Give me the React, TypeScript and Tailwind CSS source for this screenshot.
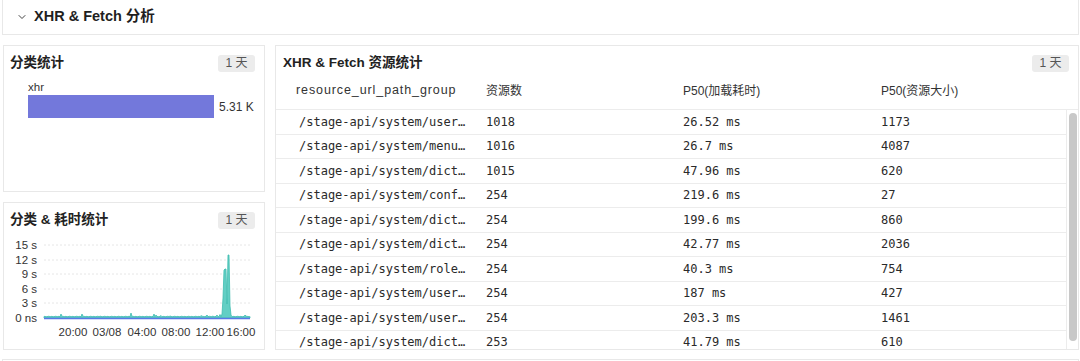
import { ChevronDown } from 'lucide-react'

const sans = { fontFamily: '"Liberation Sans", "Noto Sans CJK SC", sans-serif' }
const mono = { fontFamily: '"DejaVu Sans Mono", "Liberation Mono", monospace' }

const rows = [
  ['/stage-api/system/user…', '1018', '26.52 ms', '1173'],
  ['/stage-api/system/menu…', '1016', '26.7 ms', '4087'],
  ['/stage-api/system/dict…', '1015', '47.96 ms', '620'],
  ['/stage-api/system/conf…', '254', '219.6 ms', '27'],
  ['/stage-api/system/dict…', '254', '199.6 ms', '860'],
  ['/stage-api/system/dict…', '254', '42.77 ms', '2036'],
  ['/stage-api/system/role…', '254', '40.3 ms', '754'],
  ['/stage-api/system/user…', '254', '187 ms', '427'],
  ['/stage-api/system/user…', '254', '203.3 ms', '1461'],
  ['/stage-api/system/dict…', '253', '41.79 ms', '610'],
]

function Badge() {
  return (
    <span className="flex h-[17px] w-[37px] items-center justify-center rounded-[3px] bg-[#ececec] text-[12px] text-[#555]">
      1 天
    </span>
  )
}

function CardTitle({ title, pl = 'pl-[6px]' }: { title: string; pl?: string }) {
  return (
    <div className={`flex items-center justify-between pr-[9px] pt-[8px] ${pl}`}>
      <span className="text-[13.5px] font-bold leading-[18px] text-[#222]">{title}</span>
      <Badge />
    </div>
  )
}

const bumps: Record<number, number> = {
  57: 4, 78: 4, 96: 1.8, 127: 5, 150: 4, 152: 3, 157: 2.5, 166: 2, 197: 2.5, 203: 3,
  209: 2, 213: 3, 216: 3.5, 218: 4, 219: 20, 220: 48, 221: 49, 222: 49, 223: 14,
  224: 63, 225: 63, 226: 12, 227: 3, 241: 3, 242: 2,
}

function areaPath() {
  let d = 'M40,81'
  for (let x = 40; x <= 246; x++) {
    const h = bumps[x] ?? 1.2 + ((x * 37) % 7) / 10
    d += ` L${x},${81 - h}`
  }
  return d + ' L246,81 Z'
}

function Chart() {
  const yl = [['15 s', 8], ['12 s', 23], ['9 s', 37], ['6 s', 52], ['3 s', 66], ['0 ns', 81]] as const
  const xl = [['20:00', 69], ['03/08', 103], ['04:00', 138], ['08:00', 172], ['12:00', 206], ['16:00', 237]] as const
  return (
    <svg width="258" height="104" className="mt-[8px] block" style={sans}>
      {yl.map(([t, y]) => (
        <g key={t}>
          <text x="33" y={y + 4} fontSize="11.5" fill="#333" textAnchor="end">{t}</text>
          {y !== 81 && <line x1="40" x2="246" y1={y} y2={y} stroke="#e6e6e6" strokeDasharray="2 2" />}
        </g>
      ))}
      <path d={areaPath()} fill="#62cfc4" stroke="#3fbcb0" strokeWidth="0.8" />
      <line x1="40" x2="246" y1="81.5" y2="81.5" stroke="#5a78e6" strokeWidth="1.5" />
      {xl.map(([t, x]) => (
        <text key={t} x={x} y="99" fontSize="11.5" fill="#333" textAnchor="middle">{t}</text>
      ))}
    </svg>
  )
}

export default function App() {
  return (
    <div className="h-[361px] w-[1080px] overflow-hidden bg-white" style={sans}>
      <div className="ml-[2px] mr-[1px] flex h-[35px] items-center border border-t-0 border-[#e8e8e8] pl-[13px]">
        <ChevronDown size={12} strokeWidth={2} className="mr-[6px] text-[#444]" />
        <span className="text-[14.5px] font-bold text-[#1f1f1f]">XHR &amp; Fetch 分析</span>
      </div>

      <div className="mt-[10px] flex gap-[10px] pl-[3px] pr-[1px]">
        <div className="flex w-[262px] flex-col gap-[10px]">
          <div className="h-[147px] border border-[#e8e8e8]">
            <CardTitle title="分类统计" />
            <div className="pl-[24px] pt-[8px]">
              <div className="text-[11.5px] leading-[14px] text-[#333]">xhr</div>
              <div className="mt-[1px] flex items-center">
                <div className="h-[23px] w-[186px] bg-[#7378db]" />
                <span className="ml-[5px] text-[12px] text-[#333]">5.31 K</span>
              </div>
            </div>
          </div>
          <div className="h-[148px] border border-[#e8e8e8]">
            <CardTitle title="分类 & 耗时统计" />
            <Chart />
          </div>
        </div>

        <div className="flex h-[305px] flex-1 flex-col border border-[#e8e8e8]">
          <CardTitle title="XHR & Fetch 资源统计" pl="pl-[7px]" />
          <div className="flex h-[37px] items-center text-[12px] text-[#333]">
            <div className="w-[200px] pl-[20px] text-[12.5px] tracking-[0.9px]">resource_url_path_group</div>
            <div className="w-[197px] pl-[10px]">资源数</div>
            <div className="w-[198px] pl-[10px]">P50(加载耗时)</div>
            <div className="pl-[10px]">P50(资源大小)</div>
          </div>
          <div className="flex min-h-0 flex-1 border-t border-[#ececec]">
            <div className="min-w-0 flex-1 overflow-hidden">
              {rows.map((r, i) => (
                <div key={i} className="flex h-[24.5px] shrink-0 items-center border-b border-[#ececec] text-[12px] text-[#2a2a2a]" style={mono}>
                  <div className="w-[200px] pl-[23px]">{r[0]}</div>
                  <div className="w-[197px] pl-[10px]">{r[1]}</div>
                  <div className="w-[198px] pl-[10px]">{r[2]}</div>
                  <div className="pl-[10px]">{r[3]}</div>
                </div>
              ))}
            </div>
            <div className="w-[12px] border-l border-[#ececec] pl-[2px] pt-[3px]">
              <div className="h-[228px] w-[8px] rounded-full bg-[#c8c8c8]" />
            </div>
          </div>
        </div>
      </div>

      <div className="ml-[2px] mr-[1px] mt-[9px] h-[4px] border border-b-0 border-[#e8e8e8]" />
    </div>
  )
}
